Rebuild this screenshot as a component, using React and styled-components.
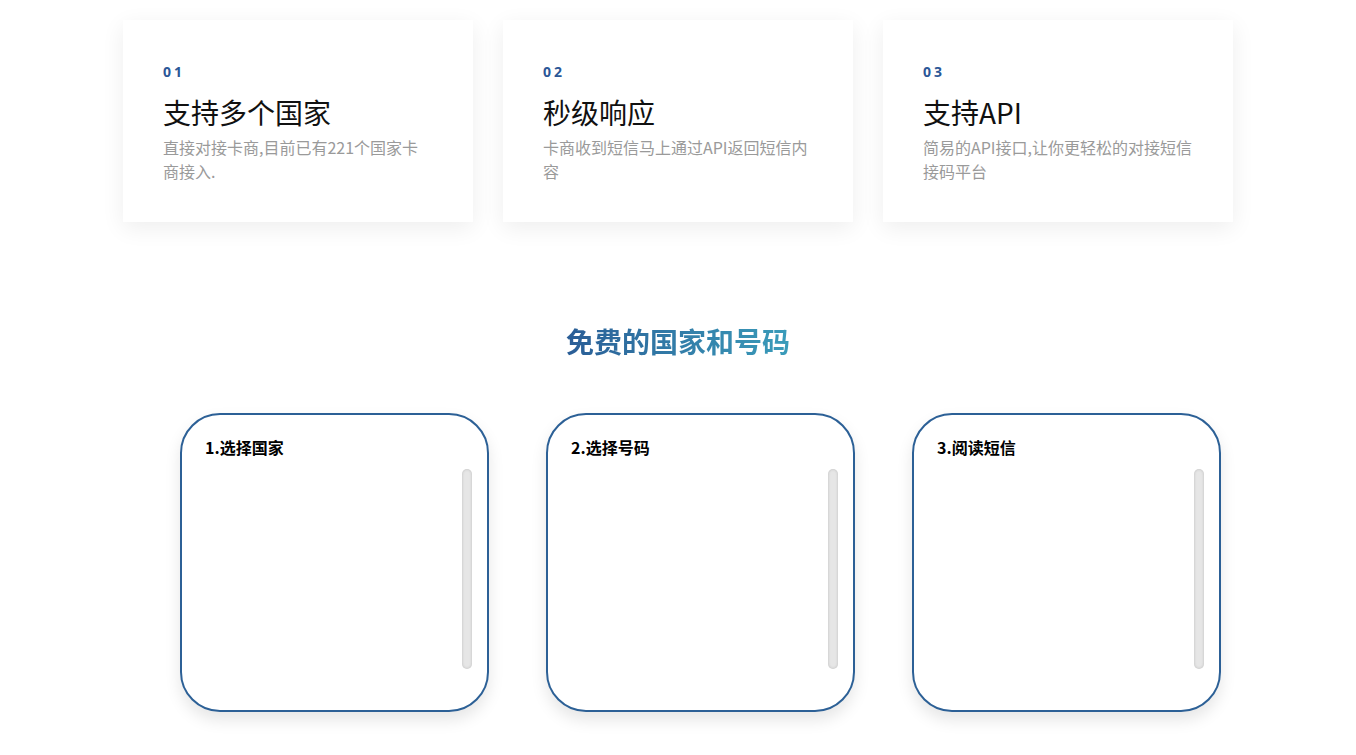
import styled, { createGlobalStyle } from "styled-components";

const GlobalStyle = createGlobalStyle`
  body {
    margin: 0;
    background: #fff;
    font-family: "Open Sans", "Noto Sans CJK SC", sans-serif;
  }
`;

const Page = styled.div`
  width: 1110px;
  margin: 0 auto;
  padding: 20px 0 40px;
`;

const Features = styled.div`
  display: grid;
  grid-template-columns: repeat(3, 350px);
  gap: 30px;
`;

const Card = styled.div`
  background: #fff;
  box-shadow: 0 6px 22px rgba(0, 0, 0, 0.07);
  padding: 42px 40px 39px;
  height: 202px;
  box-sizing: border-box;
`;

const Num = styled.div`
  font-family: "Open Sans", sans-serif;
  font-weight: 700;
  font-size: 14px;
  line-height: 20px;
  letter-spacing: 3px;
  color: #2b5797;
`;

const CardTitle = styled.h3`
  margin: 10px 0 3px;
  font-family: "Noto Sans CJK SC", "Noto Sans", sans-serif;
  font-weight: 400;
  font-size: 28px;
  line-height: 40px;
  color: #111;
`;

const CardText = styled.p`
  margin: 0;
  font-family: "Noto Sans CJK SC", "Noto Sans", sans-serif;
  font-size: 16px;
  line-height: 24px;
  color: #9a9a9a;
`;

const Heading = styled.h2`
  margin: 99px 0 52px;
  text-align: center;
  font-family: "Noto Sans CJK SC", sans-serif;
  font-weight: 700;
  font-size: 28px;
  line-height: 40px;
  span {
    background: linear-gradient(90deg, #2a5d96, #3a9cba);
    -webkit-background-clip: text;
    background-clip: text;
    color: transparent;
  }
`;

const Steps = styled.div`
  display: flex;
  gap: 57px;
  padding-left: 57px;
`;

const Step = styled.div`
  width: 309px;
  height: 299px;
  box-sizing: border-box;
  border: 2px solid #2c6096;
  border-radius: 40px;
  background: #fff;
  box-shadow: 0 8px 16px rgba(0, 0, 0, 0.1);
  padding: 20px 15px 41px 23px;
  display: flex;
  flex-direction: column;
`;

const StepTitle = styled.div`
  font-family: "Noto Sans CJK SC", sans-serif;
  font-weight: 700;
  font-size: 16px;
  line-height: 24px;
  color: #000;
`;

const List = styled.div`
  margin-top: 10px;
  display: flex;
  justify-content: flex-end;
  flex: 1;
`;

const Track = styled.div`
  width: 10px;
  height: 200px;
  border-radius: 5px;
  background: #e6e6e6;
  box-shadow: inset 0 0 3px rgba(0, 0, 0, 0.18);
`;

const features = [
  { n: "01", title: "支持多个国家", text: "直接对接卡商,目前已有221个国家卡商接入." },
  { n: "02", title: "秒级响应", text: "卡商收到短信马上通过API返回短信内容" },
  { n: "03", title: "支持API", text: "简易的API接口,让你更轻松的对接短信接码平台" },
];

const steps = ["1.选择国家", "2.选择号码", "3.阅读短信"];

export default function App() {
  return (
    <>
      <GlobalStyle />
      <Page>
        <Features>
          {features.map((f) => (
            <Card key={f.n}>
              <Num>{f.n}</Num>
              <CardTitle>{f.title}</CardTitle>
              <CardText>{f.text}</CardText>
            </Card>
          ))}
        </Features>
        <Heading>
          <span>免费的国家和号码</span>
        </Heading>
        <Steps>
          {steps.map((s) => (
            <Step key={s}>
              <StepTitle>{s}</StepTitle>
              <List>
                <Track />
              </List>
            </Step>
          ))}
        </Steps>
      </Page>
    </>
  );
}
